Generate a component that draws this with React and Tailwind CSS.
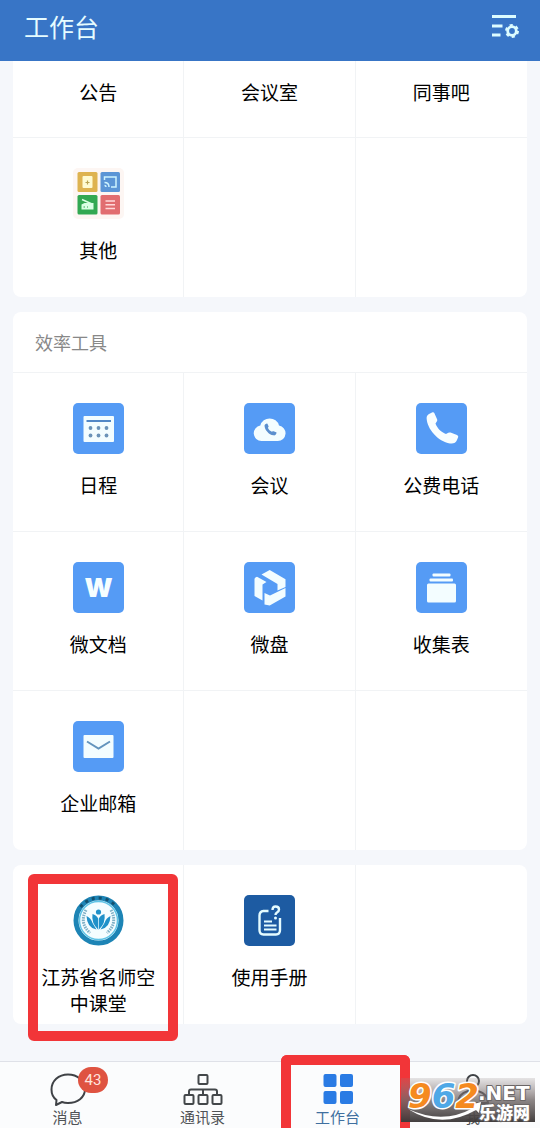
import { useState } from "react";
import clsx from "clsx";

const Tile = ({ children, className = "fill-[#559bf5]" }) => (
  <svg viewBox="0 0 51 51" className="size-[51px]" aria-hidden="true">
    <rect width="51" height="51" rx="5" className={className} />
    {children}
  </svg>
);

const OtherIcon = () => (
  <Tile className="fill-[#fdf6f3]">
    <rect x="4.5" y="4" width="20" height="20" rx="1.5" fill="#deb350" />
    <rect x="27.5" y="4" width="19.5" height="20" rx="1.5" fill="#5b95d6" />
    <rect x="4.5" y="27" width="20" height="19.5" rx="1.5" fill="#32a852" />
    <rect x="27.5" y="27" width="19.5" height="19.5" rx="1.5" fill="#e16d70" />
    <rect x="9.5" y="8" width="10" height="12" rx="1" fill="#fffbd2" />
    <path d="M14.5 12.5v4M12.5 14.5h4" stroke="#b9a352" strokeWidth="1.2" />
    <path
      d="M31.5 12V9H43v10h-5M31.5 14.500q4.5 0 4.5 4.5M31.5 17.5q1.5 0 1.5 1.5"
      fill="none"
      stroke="#cdf3ff"
      strokeWidth="1.5"
    />
    <path d="M9 31.5l10 4.500" stroke="#d9ffe4" strokeWidth="1.4" />
    <path d="M8.5 36.5l3-1.500h9v6.5h-12z" fill="#d9ffe4" />
    <path d="M10.5 39h1.5M14 39h1" stroke="#32a852" strokeWidth="1.2" />
    <path d="M32.5 33h9.5M32.5 36.8h9.5M32.5 40.5h9.5" stroke="#ffd9da" strokeWidth="1.5" />
  </Tile>
);

const CalendarIcon = () => (
  <Tile>
    <rect x="10.5" y="13" width="30.5" height="26" rx="1" fill="#f3fdff" />
    <path d="M13.5 18H38" stroke="#5288c6" strokeWidth="2" />
    <g fill="#6b93b8">
      {[17.5, 25.5, 33.5].map((x) => (
        <g key={x}>
          <circle cx={x} cy="25" r="1.9" />
          <circle cx={x} cy="32.5" r="1.9" />
        </g>
      ))}
    </g>
  </Tile>
);

const handset =
  "M14 10.500L16.500 9.300Q17.700 8.900 18.300 10L21.200 16.500Q21.500 17.600 20.800 18.400L19.500 20.500C21 25 25.500 29.500 30 31L32.300 29.700Q33.300 29.200 34.500 29.500L41 32Q42.600 32.800 42.200 34L41 37C40 40 37 41 34 40.400C22 38.500 11 26 10.600 15C10.600 13 12 11.300 14 10.500Z";

const PhoneIcon = () => (
  <Tile>
    <path d={handset} fill="#f8feff" />
  </Tile>
);

const MeetingIcon = () => (
  <Tile>
    <path
      d="M17.5 38a7.8 7.8 0 0 1-1.200-15.500a9.700 9.700 0 0 1 18.700 0a7.800 7.800 0 0 1-1.200 15.500z"
      fill="#f3fdff"
    />
    <path d={handset} fill="#5b8fce" transform="translate(16.500 17) scale(0.380)" />
  </Tile>
);

const DocIcon = () => (
  <Tile>
    <text
      x="25.5"
      y="35"
      textAnchor="middle"
      className="fill-[#f6feff] font-['Inter',sans-serif] text-[26px] font-black"
    >
      W
    </text>
  </Tile>
);

const DriveIcon = () => (
  <Tile>
    <g fill="#f3fdff">
      <path d="M17.5 12.500L25.700 8L41.500 17.300V25L33.500 28.500V22z" />
      <path d="M10.5 17Q11 15 13 14.800L22.500 20L18.500 22.500V38.500L10.500 34z" />
      <path d="M20.5 31L26 33.500L41.500 26V34.500L25.700 43.500L20.500 42.500z" />
    </g>
  </Tile>
);

const CollectIcon = () => (
  <Tile>
    <g fill="#f3fdff">
      <rect x="16.5" y="11.5" width="18" height="3" rx="1" />
      <rect x="13.5" y="16.5" width="23.5" height="3" rx="1" />
      <rect x="11" y="21.5" width="29" height="19" rx="1.5" />
    </g>
  </Tile>
);

const MailIcon = () => (
  <Tile>
    <rect x="10.5" y="14" width="30" height="23" rx="1" fill="#f3fdff" />
    <path d="M14 20.5l11.5 7l11.5-7" fill="none" stroke="#6394bd" strokeWidth="2" />
  </Tile>
);

const ManualIcon = () => (
  <Tile className="fill-[#1d5ba2]">
    <path
      d="M24.5 16H19.500Q15.500 16.500 15.500 20.500V35Q15.500 39.500 19.500 39.500H32Q36 39.500 36 35V23"
      fill="none"
      stroke="#e4fbff"
      strokeWidth="2.4"
    />
    <path d="M20 26.5h8M20 30.5h12.5M20 34.5h12.5" stroke="#e4fbff" strokeWidth="1.8" />
    <path
      d="M28.5 15Q28.5 11.500 31.500 11.500Q35 11.500 35 14.500Q35 16.500 33 17.500Q31.500 18.500 31.500 20"
      fill="none"
      stroke="#e4fbff"
      strokeWidth="2.4"
    />
    <circle cx="31.5" cy="23" r="1.5" fill="#e4fbff" />
  </Tile>
);

const ClassroomIcon = () => (
  <svg viewBox="0 0 51 51" className="size-[51px]" aria-hidden="true">
    <circle cx="25.5" cy="25.5" r="22.5" fill="#f4fdff" stroke="#1d84b5" strokeWidth="5" />
    <circle cx="25.5" cy="25.5" r="19" fill="none" stroke="#5fc4e6" strokeWidth="1.5" />
    <path
      d="M7.5 12A22.5 22.5 0 0 1 43.5 12"
      fill="none"
      stroke="#12516f"
      strokeWidth="3"
      strokeDasharray="3 4"
    />
    <g fill="none" stroke="#7fb0c6" strokeWidth="3" strokeDasharray="1.5 1">
      <path d="M13 15Q6 28 17 38" />
      <path d="M38 15Q45 28 34 38" />
    </g>
    <g fill="#1f91c9">
      <circle cx="25.5" cy="17" r="2.6" />
      <path d="M25.5 35Q18 28 19.500 19Q23.500 20 25.500 24Q27.500 20 31.500 19Q33 28 25.500 35z" />
      <path d="M23.500 34.500Q14 33 13.500 21Q18 23 19.500 28z" />
      <path d="M27.500 34.500Q37 33 37.500 21Q33 23 31.500 28z" />
    </g>
    <path d="M25.5 23v12" stroke="#d5f3ff" strokeWidth="0.8" />
  </svg>
);

const SettingsIcon = () => (
  <svg viewBox="0 0 28 24" className="h-6 w-7" fill="none" stroke="#dcfcff" aria-hidden="true">
    <path d="M0 2.5h24M0 12h10.5M0 21h8.5" strokeWidth="2.8" />
    <circle cx="20" cy="17" r="4.3" strokeWidth="2.8" />
    <circle cx="20" cy="17" r="5.9" strokeWidth="2.2" strokeDasharray="3.09 3.09" />
  </svg>
);

const ChatIcon = () => (
  <svg viewBox="0 0 40 34" className="h-[34px] w-10" aria-hidden="true">
    <path
      d="M8.5 28C5 25.500 3.500 21.500 3.500 17.500C3.500 9 10.500 2.500 20 2.500S37 9 37 17C37 25.500 29.500 31 20 31Q16.500 31 14 30L8 33Z"
      fill="none"
      stroke="#3f4246"
      strokeWidth="2"
      strokeLinejoin="round"
    />
  </svg>
);

const ContactsIcon = () => (
  <svg viewBox="0 0 40 34" className="h-[34px] w-10" fill="none" stroke="#43474a" strokeWidth="2" aria-hidden="true">
    <rect x="15.5" y="3" width="9" height="9" rx="1" />
    <rect x="1.5" y="23" width="9" height="9" rx="1" />
    <rect x="15.5" y="23" width="9" height="9" rx="1" />
    <rect x="29.5" y="23" width="9" height="9" rx="1" />
    <path d="M20 17.5V23M6 23v-3.500q0-2 2-2h24q2 0 2 2V23" />
  </svg>
);

const WorkbenchIcon = () => (
  <svg viewBox="0 0 40 34" className="h-[34px] w-10" fill="#2a7be4" aria-hidden="true">
    <rect x="5.5" y="2" width="13" height="13" rx="2" />
    <rect x="22" y="2" width="13" height="13" rx="2" />
    <rect x="5.5" y="19" width="13" height="13" rx="2" />
    <rect x="22" y="19" width="13" height="13" rx="2" />
  </svg>
);

const MeIcon = () => (
  <svg viewBox="0 0 40 34" className="h-[34px] w-10" fill="none" stroke="#3f4246" strokeWidth="2" aria-hidden="true">
    <circle cx="20" cy="9" r="6" />
    <path d="M5 31q0-9 10-12h10q10 3 10 12z" />
  </svg>
);

const Watermark = () => (
  <svg
    viewBox="0 0 134 44"
    className="pointer-events-none absolute right-[5px] bottom-[6px] h-11 w-[134px] overflow-visible"
    aria-label="962.NET 乐游网"
  >
    <defs>
      <linearGradient id="shade" x1="0" y1="0" x2="0" y2="1">
        <stop offset="0" stopColor="#8c8080" stopOpacity="0.2" />
        <stop offset="0.5" stopColor="#706868" stopOpacity="0.8" />
        <stop offset="1" stopColor="#3c3838" stopOpacity="0.97" />
      </linearGradient>
    </defs>
    <rect width="134" height="44" fill="url(#shade)" />
    <path d="M7 31Q42 47 72 30L69 27L80 24L78 35L75 32Q40 52 7 31z" fill="#fff" />
    <g
      className="font-['DejaVu_Sans','Noto_Sans_CJK_SC',sans-serif] font-bold"
      strokeLinejoin="round"
      paintOrder="stroke"
    >
      <text x="7" y="30" className="text-[34px] italic" stroke="#fff" strokeWidth="3">
        <tspan fill="#f58a1f">9</tspan>
        <tspan fill="#4fa8e6">6</tspan>
        <tspan fill="#f58a1f">2</tspan>
      </text>
      <g fill="#fff" stroke="#6b6666" strokeWidth="2">
        <text x="77" y="22" className="text-[20px]">
          .NET
        </text>
        <text x="78" y="41" className="text-[17px] font-black">
          乐游网
        </text>
      </g>
    </g>
  </svg>
);

const toolRows = [
  [
    { label: "日程", icon: CalendarIcon },
    { label: "会议", icon: MeetingIcon },
    { label: "公费电话", icon: PhoneIcon },
  ],
  [
    { label: "微文档", icon: DocIcon },
    { label: "微盘", icon: DriveIcon },
    { label: "收集表", icon: CollectIcon },
  ],
  [{ label: "企业邮箱", icon: MailIcon }, null, null],
];

const tabs = [
  { label: "消息", icon: ChatIcon, badge: 43 },
  { label: "通讯录", icon: ContactsIcon },
  { label: "工作台", icon: WorkbenchIcon, marked: true },
  { label: "我", icon: MeIcon },
];

const Row = ({ items, short }) => (
  <div
    className={clsx(
      "grid grid-cols-3 divide-x divide-[#f1f3f5] border-b border-[#f1f3f5] last:border-b-0",
      short ? "h-[77px]" : "h-[159px]"
    )}
  >
    {items.map((item, i) => (
      <div key={i} className="relative flex justify-center">
        {item && (
          <button
            className={clsx(
              "flex w-full flex-col items-center px-6 text-[19px] leading-[26px]",
              short ? "pt-[18px]" : "gap-[18px] pt-[30px]"
            )}
          >
            {item.icon && <item.icon />}
            <span className="w-[118px]">{item.label}</span>
          </button>
        )}
        {item?.marked && (
          <div className="pointer-events-none absolute top-[9px] right-[5px] -bottom-[17px] left-[15px] rounded-md border-10 border-[#f23538]" />
        )}
      </div>
    ))}
  </div>
);

const App = () => {
  const [active, setActive] = useState("工作台");

  return (
    <div className="flex min-h-screen flex-col overflow-hidden bg-[#f5f7fb] font-['Noto_Sans_CJK_SC',sans-serif] text-black">
      <header className="flex h-[61px] items-start justify-between bg-[#3875c6] pt-2 pr-5 pl-6">
        <h1 className="text-[25px] leading-9 text-[#e6fcff]">工作台</h1>
        <button aria-label="管理" className="pt-[6px]">
          <SettingsIcon />
        </button>
      </header>

      <main className="flex flex-col gap-[15px] px-[13px] pb-[37px]">
        <section className="rounded-b-lg bg-white">
          <Row short items={[{ label: "公告" }, { label: "会议室" }, { label: "同事吧" }]} />
          <Row items={[{ label: "其他", icon: OtherIcon }, null, null]} />
        </section>

        <section className="rounded-lg bg-white">
          <h2 className="border-b border-[#f1f3f5] px-[22px] py-[17px] text-[18px] leading-[26px] text-[#888]">
            效率工具
          </h2>
          {toolRows.map((items, i) => (
            <Row key={i} items={items} />
          ))}
        </section>

        <section className="rounded-lg bg-white">
          <Row
            items={[
              { label: "江苏省名师空中课堂", icon: ClassroomIcon, marked: true },
              { label: "使用手册", icon: ManualIcon },
              null,
            ]}
          />
        </section>
      </main>

      <nav className="relative mt-auto grid grid-cols-4 border-t border-[#dfe1e8] bg-[#fbfcfd]">
        {tabs.map((tab) => (
          <button
            key={tab.label}
            onClick={() => setActive(tab.label)}
            className={clsx(
              "relative flex flex-col items-center pt-[10px] text-[15px] leading-[22px]",
              active === tab.label ? "text-[#3f6f9f]" : "text-[#505356]"
            )}
          >
            <span className="relative">
              <tab.icon />
              {tab.badge && (
                <span className="absolute -top-[5px] left-[30px] rounded-full bg-[#df5341] px-[7px] font-['Roboto'] text-[15px] leading-[26px] text-[#ffe3dd]">
                  {tab.badge}
                </span>
              )}
            </span>
            {tab.label}
            {tab.marked && (
              <span className="pointer-events-none absolute -top-[7px] -right-[5px] bottom-0 left-[11px] rounded-t-md border-10 border-b-0 border-[#f23538]" />
            )}
          </button>
        ))}
        <Watermark />
      </nav>
    </div>
  );
};

export default App;
